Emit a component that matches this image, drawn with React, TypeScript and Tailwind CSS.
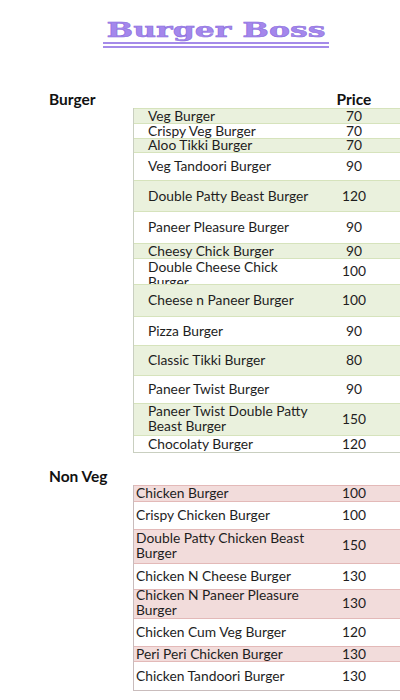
import React from "react";

type Item = { name: string; price: string; h: number; top?: number; two?: boolean };

const veg: Item[] = [
  { name: "Veg Burger", price: "70", h: 15 },
  { name: "Crispy Veg Burger", price: "70", h: 15 },
  { name: "Aloo Tikki Burger", price: "70", h: 14 },
  { name: "Veg Tandoori Burger", price: "90", h: 28 },
  { name: "Double Patty Beast Burger", price: "120", h: 31 },
  { name: "Paneer Pleasure Burger", price: "90", h: 32 },
  { name: "Cheesy Chick Burger", price: "90", h: 15 },
  { name: "Double Cheese Chick Burger", price: "100", h: 26, top: 1, two: true },
  { name: "Cheese n Paneer Burger", price: "100", h: 32 },
  { name: "Pizza Burger", price: "90", h: 29 },
  { name: "Classic Tikki Burger", price: "80", h: 30 },
  { name: "Paneer Twist Burger", price: "90", h: 28 },
  { name: "Paneer Twist Double Patty Beast Burger", price: "150", h: 32, two: true },
  { name: "Chocolaty Burger", price: "120", h: 17 },
];

const nonVeg: Item[] = [
  { name: "Chicken Burger", price: "100", h: 16 },
  { name: "Crispy Chicken Burger", price: "100", h: 28 },
  { name: "Double Patty Chicken Beast Burger", price: "150", h: 34, two: true },
  { name: "Chicken N Cheese Burger", price: "130", h: 26 },
  { name: "Chicken N Paneer Pleasure Burger", price: "130", h: 29, two: true },
  { name: "Chicken Cum Veg Burger", price: "120", h: 28 },
  { name: "Peri Peri Chicken Burger", price: "130", h: 15 },
  { name: "Chicken Tandoori Burger", price: "130", h: 29 },
];

const font = { fontFamily: "Lato, 'Open Sans', sans-serif" };

function VegRow({ item, i }: { item: Item; i: number }) {
  const bg = i % 2 === 0 ? "bg-[#eaf1dd]" : "bg-white";
  const clipTop = item.top !== undefined;
  return (
    <div
      className={`flex items-center border-t border-[#d6e3bc] pb-[2px] ${bg} ${item.two ? "overflow-hidden" : ""}`}
      style={{ height: item.h }}
    >
      <div
        className={`w-[180px] pl-[14px] text-[13.8px] text-[#1e1e1e] ${item.two ? "leading-[14.5px]" : "leading-[13px]"} ${clipTop ? "self-start" : ""}`}
        style={clipTop ? { paddingTop: item.top } : undefined}
      >
        {item.name}
      </div>
      <div className="w-[80px] text-center text-[13.8px] leading-[13px] text-[#1e1e1e]">{item.price}</div>
    </div>
  );
}

function NonVegRow({ item, i }: { item: Item; i: number }) {
  const bg = i % 2 === 0 ? "bg-[#f2dcdb]" : "bg-white";
  return (
    <div
      className={`flex items-center border-t border-[#e3b9b8] ${item.two ? "overflow-hidden pb-[4px]" : "pb-[2px]"} ${bg}`}
      style={{ height: item.h }}
    >
      <div
        className={`w-[180px] pl-[2px] pr-2 text-[13.8px] text-[#1e1e1e] ${item.two ? "leading-[15px]" : "leading-[13px]"}`}
      >
        {item.name}
      </div>
      <div className="w-[80px] text-center text-[13.8px] leading-[13px] text-[#1e1e1e]">{item.price}</div>
    </div>
  );
}

export default function App() {
  return (
    <div className="w-[400px] h-[700px] bg-white overflow-hidden" style={font}>
      {/* Title */}
      <div className="ml-[103px] w-[226px] pt-[19px] h-[92px]">
        <div
          className="text-center text-[21px] leading-[21px] font-bold text-[#a487ec] scale-x-[1.5]"
          style={{ fontFamily: "'DejaVu Serif', serif", WebkitTextStroke: "0.5px #8a6cdc" }}
        >
          Burger Boss
        </div>
        <div className="mt-[2px] h-[2px] bg-[#a58be9]" />
        <div className="mt-[2px] h-[2px] bg-[#a58be9]" />
      </div>

      {/* Veg header */}
      <div className="flex items-center h-[16px] text-[15.5px] font-bold text-[#111]">
        <div className="pl-[49px] w-[314px]">Burger</div>
        <div className="w-[80px] text-center">Price</div>
      </div>

      <div className="ml-[133px] border-l border-b border-[#c9cfc0]">
        {veg.map((it, i) => (
          <VegRow key={it.name} item={it} i={i} />
        ))}
      </div>

      <div className="mt-[16px] flex items-center h-[16px] text-[15.5px] font-bold text-[#111]">
        <div className="pl-[49px]">Non Veg</div>
      </div>

      <div className="ml-[133px] border-l border-b border-[#c9bcbc]">
        {nonVeg.map((it, i) => (
          <NonVegRow key={it.name} item={it} i={i} />
        ))}
      </div>
    </div>
  );
}
